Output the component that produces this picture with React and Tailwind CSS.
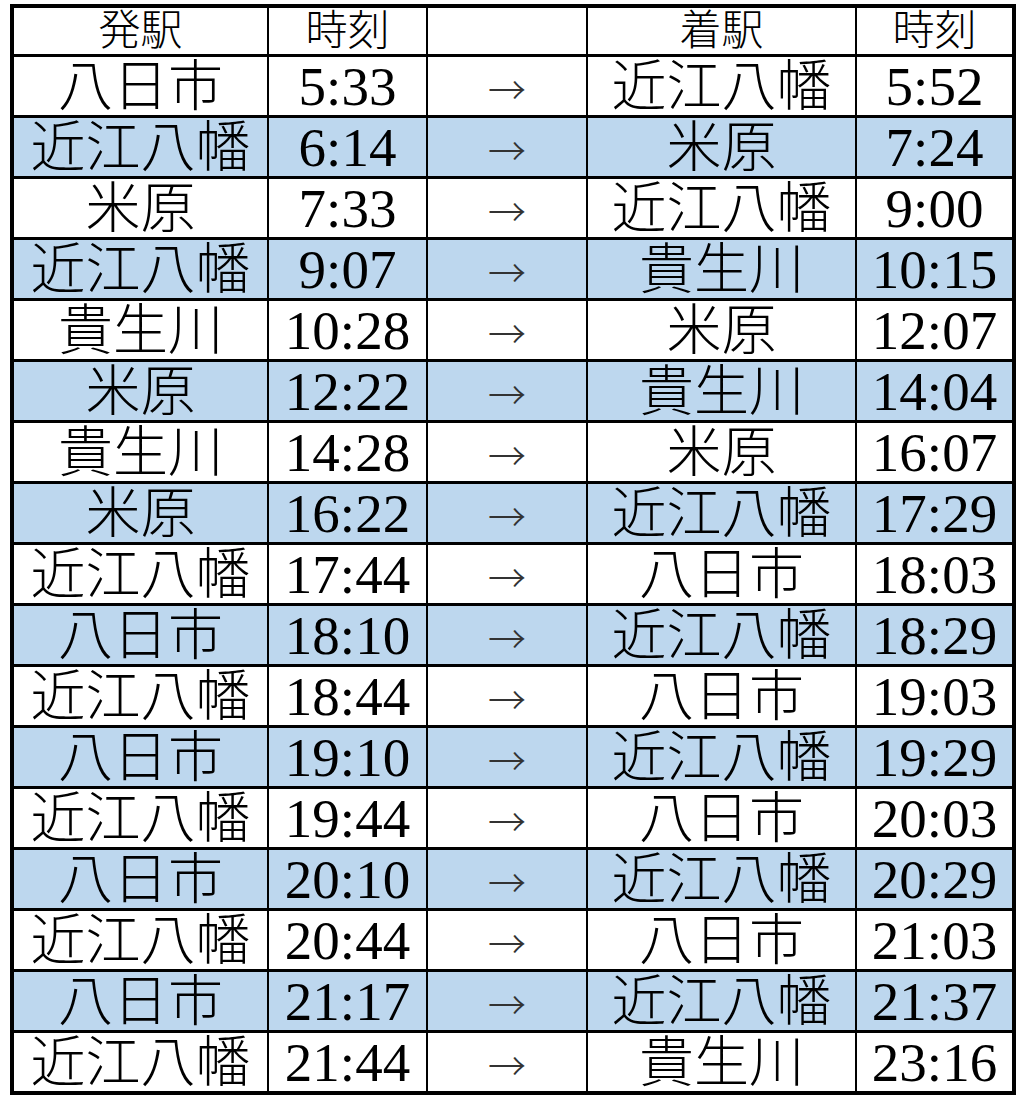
import React from "react";

const rows = [
  ["八日市", "5:33", "近江八幡", "5:52"],
  ["近江八幡", "6:14", "米原", "7:24"],
  ["米原", "7:33", "近江八幡", "9:00"],
  ["近江八幡", "9:07", "貴生川", "10:15"],
  ["貴生川", "10:28", "米原", "12:07"],
  ["米原", "12:22", "貴生川", "14:04"],
  ["貴生川", "14:28", "米原", "16:07"],
  ["米原", "16:22", "近江八幡", "17:29"],
  ["近江八幡", "17:44", "八日市", "18:03"],
  ["八日市", "18:10", "近江八幡", "18:29"],
  ["近江八幡", "18:44", "八日市", "19:03"],
  ["八日市", "19:10", "近江八幡", "19:29"],
  ["近江八幡", "19:44", "八日市", "20:03"],
  ["八日市", "20:10", "近江八幡", "20:29"],
  ["近江八幡", "20:44", "八日市", "21:03"],
  ["八日市", "21:17", "近江八幡", "21:37"],
  ["近江八幡", "21:44", "貴生川", "23:16"],
];

const grid = "grid grid-cols-[255px_159px_160px_269px_155px]";
const jp = "font-['Liberation_Serif','Noto_Sans_CJK_JP',serif] font-light";

export default function App() {
  return (
    <div className="bg-white w-[1024px] h-[1102px] pt-[4px] pl-[10px]">
      <div className="w-[1006px] border-4 border-black text-black">
        <div className={`${grid} h-[49px] border-b-[3px] border-black text-[42px] leading-none ${jp}`}>
          <div className="border-r-2 border-black flex items-center justify-center">発駅</div>
          <div className="border-r-2 border-black flex items-center justify-center">時刻</div>
          <div className="border-r-2 border-black"></div>
          <div className="border-r-2 border-black flex items-center justify-center">着駅</div>
          <div className="flex items-center justify-center">時刻</div>
        </div>
        {rows.map((r, i) => {
          const blue = i % 2 === 1;
          const last = i === rows.length - 1;
          const bg = blue ? "bg-[#bdd7ee]" : "bg-white";
          return (
            <div
              key={i}
              className={`${grid} ${last ? "h-[58px]" : "h-[61px] border-b-[3px] border-black"} leading-none`}
            >
              <div className={`${bg} border-r-2 border-black flex items-center justify-center text-[55px] ${jp}`}>{r[0]}</div>
              <div className={`${bg} border-r-2 border-black flex items-center justify-center text-[55px] font-['Liberation_Serif',serif]`}>{r[1]}</div>
              <div className={`${bg} border-r-2 border-black flex items-center justify-center pt-[4px] text-[38px] text-[#333] font-['Noto_Sans_CJK_JP',sans-serif] font-light`}>→</div>
              <div className={`${bg} border-r-2 border-black flex items-center justify-center text-[55px] ${jp}`}>{r[2]}</div>
              <div className={`${bg} flex items-center justify-center text-[55px] font-['Liberation_Serif',serif]`}>{r[3]}</div>
            </div>
          );
        })}
      </div>
    </div>
  );
}
